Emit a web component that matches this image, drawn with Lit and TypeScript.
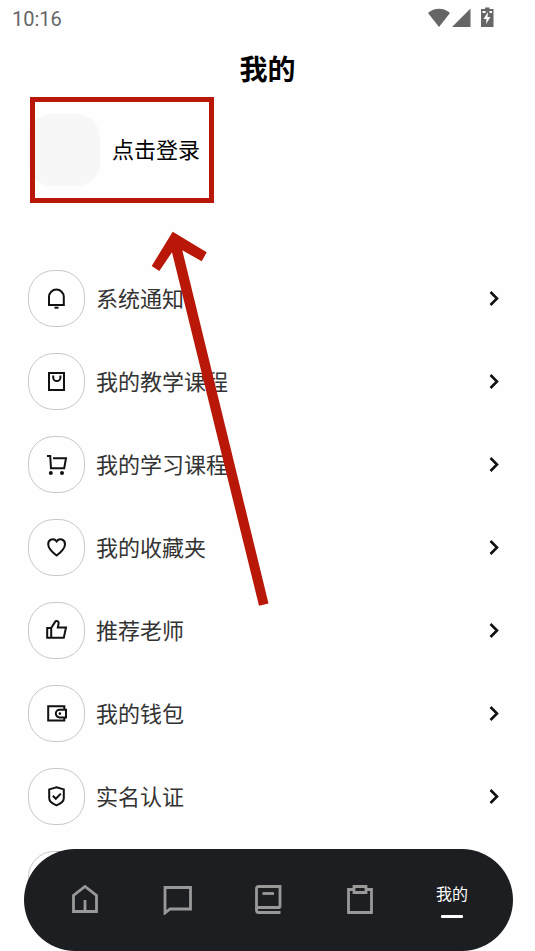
import { LitElement, html, css, svg, nothing } from "lit";
import { customElement, state } from "lit/decorators.js";
import { classMap } from "lit/directives/class-map.js";

const menuIcons = {
  bell: svg`<path d="M5 19V11a7.4 7.4 0 0 1 14.8 0V19Z"/><path d="M10.5 21.7h4"/>`,
  bag: svg`<path d="M5 4h15v17H5Z"/><path d="M9.2 6.5v2a3.6 3.6 0 0 0 7.2 0v-2"/>`,
  cart: svg`<path d="M3 4h3.2L7 16.3h13.2L22 6.3H9"/><circle class="dot" cx="6.8" cy="21" r="2"/><circle class="dot" cx="18" cy="21" r="2"/>`,
  heart: svg`<path d="M12.6 20.5C8 17 4.2 13.5 4.2 9.2C4.2 4.200 10 2.800 12.6 6.400C15.200 2.800 21 4.200 21 9.200C21 13.5 17.2 17 12.6 20.5Z"/>`,
  thumb: svg`<path d="M7.2 10L11.6 3.2C13.6 2.6 15 3.8 14.6 5.600L13.8 9.5H22L19.8 19.8H3.2V10H7.2V19.8"/>`,
  wallet: svg`<path d="M20.3 8V5.2H4.2v14.3h16.1v-2.8"/><path d="M22 8.8h-6.4a3.8 3.8 0 0 0 0 7.6H22Z"/><circle class="dot" cx="15.9" cy="12.6" r="1.3"/>`,
  shield: svg`<path d="M12.5 3.2L19.8 5.4V14.2C19.8 17.5 16.5 19.7 12.5 21.4C8.5 19.7 5.2 17.5 5.2 14.2V5.4Z"/><path d="M8.8 11.8l3 3 5-5.2"/>`,
};

const tabIcons = {
  home: svg`<path d="M4.5 28.5V12.5L16 3.5L27.5 12.5V28.5Z"/><path d="M16 28V17"/>`,
  chat: svg`<path d="M4 4.500H29.500V26H9L4 30Z"/>`,
  book: svg`<path d="M28.500 24.500H6.500C4.900 24.500 4.500 25.500 4.500 27S5.500 29.500 6.500 29.500H28.500"/><path d="M4.500 27V5.500A2 2 0 0 1 6.500 3.500H28V24.500"/><path d="M10.500 10.500H22"/>`,
  board: svg`<path d="M10 6.500H4.500V29.500H27.500V6.500H22"/><path d="M10 3.500H22V9.500H10Z"/>`,
};

type MenuIcon = keyof typeof menuIcons;
type TabIcon = keyof typeof tabIcons;

const items: { icon: MenuIcon; label: string }[] = [
  { icon: "bell", label: "系统通知" },
  { icon: "bag", label: "我的教学课程" },
  { icon: "cart", label: "我的学习课程" },
  { icon: "heart", label: "我的收藏夹" },
  { icon: "thumb", label: "推荐老师" },
  { icon: "wallet", label: "我的钱包" },
  { icon: "shield", label: "实名认证" },
];

const tabs: TabIcon[] = ["home", "chat", "book", "board"];

@customElement("status-bar")
class StatusBar extends LitElement {
  static styles = css`
    :host {
      display: flex;
      align-items: center;
      justify-content: space-between;
      height: 38px;
      padding: 0 39px 0 12px;
      color: #666;
      font: 20px/24px Roboto, sans-serif;
    }
    .signals {
      display: block;
      fill: currentColor;
    }
    .bolt {
      fill: #fff;
    }
  `;

  render() {
    return html`
      <time>10:16</time>
      <svg class="signals" width="68" height="24" viewBox="0 0 68 24" aria-hidden="true">
        <path d="M0 6C6 .2 16 .2 22 6L11 20Z" />
        <path d="M24 20L42.500 1.500V20Z" />
        <path d="M55 2H57V.500H61.500V2H65.500V20H53V2Z" />
        <path class="bolt" d="M60 5L55.500 12H58.500L58 17L62.500 10H59.500Z" />
        <path class="bolt" d="M54.500 4h3v2h-3ZM61.500 4h2.500v2h-2.500Z" />
      </svg>
    `;
  }
}

@customElement("menu-row")
class MenuRow extends LitElement {
  static properties = { icon: {}, label: {} };
  declare icon?: MenuIcon;
  declare label?: string;

  static styles = css`
    :host {
      display: block;
    }
    .row {
      display: flex;
      align-items: center;
      gap: 11px;
      width: 100%;
      height: 83px;
      padding: 0 29px 0 28px;
      border: 0;
      background: none;
      color: #333;
      font: inherit;
      font-size: 22px;
      line-height: 32px;
      text-align: left;
      box-sizing: border-box;
      cursor: pointer;
    }
    .ring {
      display: grid;
      place-items: center;
      flex: none;
      width: 57px;
      height: 57px;
      box-sizing: border-box;
      border: 1px solid #c8c8c8;
      border-radius: 26px;
    }
    .label {
      flex: 1;
      padding-bottom: 4px;
    }
    svg {
      display: block;
      fill: none;
      stroke: #111;
      stroke-width: 2;
    }
    .dot {
      fill: #111;
      stroke: none;
    }
    .chevron {
      stroke-width: 2.6;
    }
  `;

  render() {
    return html`
      <button class="row" type="button">
        <span class="ring">
          ${this.icon
            ? html`<svg width="25" height="25" viewBox="0 0 25 25" aria-hidden="true">${menuIcons[this.icon]}</svg>`
            : nothing}
        </span>
        <span class="label">${this.label ?? nothing}</span>
        <svg class="chevron" width="24" height="24" viewBox="0 0 24 24" aria-hidden="true">
          <path d="M8.500 5L15 11.500L8.500 18" />
        </svg>
      </button>
    `;
  }
}

@customElement("tab-bar")
class TabBar extends LitElement {
  static styles = css`
    :host {
      display: block;
    }
    .bar {
      display: flex;
      height: 102px;
      padding: 0 15px 2px;
      box-sizing: border-box;
      border-radius: 51px;
      background: #1d1e22;
    }
    .tab {
      display: flex;
      flex: 1;
      flex-direction: column;
      align-items: center;
      justify-content: center;
      gap: 10px;
      padding: 0;
      border: 0;
      background: none;
      color: #999;
      font: inherit;
      font-size: 16px;
      line-height: 24px;
      cursor: pointer;
    }
    .active {
      color: #fff;
    }
    .active::after {
      content: "";
      width: 22px;
      height: 3px;
      border-radius: 1px;
      background: #fff;
    }
    svg {
      display: block;
      fill: none;
      stroke: currentColor;
      stroke-width: 2.8;
    }
  `;

  render() {
    return html`
      <nav class="bar">
        ${tabs.map(
          (tab) => html`
            <button class="tab" type="button">
              <svg width="32" height="32" viewBox="0 0 32 32" aria-hidden="true">${tabIcons[tab]}</svg>
            </button>
          `
        )}
        <button class=${classMap({ tab: true, active: true })} type="button">我的</button>
      </nav>
    `;
  }
}

@customElement("app-root")
class AppRoot extends LitElement {
  @state() private items = items;

  static styles = css`
    :host {
      display: flex;
      flex-direction: column;
      position: relative;
      height: 100vh;
      overflow: hidden;
      background: #fefefe;
      color: #000;
      font-family: "Noto Sans CJK SC", sans-serif;
    }
    .title {
      flex: none;
      margin: 0;
      font-size: 28px;
      line-height: 60px;
      font-weight: 700;
      text-align: center;
    }
    .content {
      flex: 1;
      min-height: 0;
      overflow: hidden;
    }
    .login {
      display: flex;
      align-items: center;
      gap: 12px;
      margin: 16px 28px 71px;
      padding: 0;
      border: 0;
      background: none;
      color: #000;
      font: inherit;
      font-size: 22px;
      line-height: 32px;
      cursor: pointer;
    }
    .prompt {
      padding-bottom: 4px;
    }
    .avatar {
      width: 72px;
      height: 72px;
      border-radius: 24px;
      background: #f7f7f7;
    }
    .tabs {
      position: absolute;
      left: 24px;
      right: 22px;
      bottom: 0;
    }
    .callout {
      position: absolute;
      top: 0;
      left: 0;
      pointer-events: none;
      fill: #b91708;
    }
    .frame {
      fill: none;
      stroke: #b91708;
      stroke-width: 5;
    }
  `;

  render() {
    return html`
      <status-bar></status-bar>
      <h1 class="title">我的</h1>
      <main class="content">
        <button class="login" type="button">
          <span class="avatar"></span>
          <span class="prompt">点击登录</span>
        </button>
        ${this.items.map((item) => html`<menu-row .icon=${item.icon} .label=${item.label}></menu-row>`)}
        <menu-row></menu-row>
      </main>
      <tab-bar class="tabs"></tab-bar>
      <svg class="callout" width="280" height="620" viewBox="0 0 280 620" aria-hidden="true">
        <rect class="frame" x="32.500" y="99.500" width="179" height="101" />
        <path d="M172.700 231.700L206.700 252.300L201.700 261.300L182.300 250.300L268.500 603.500L259 605.800L172 252.300L159.300 271L151.700 266Z" />
      </svg>
    `;
  }
}
